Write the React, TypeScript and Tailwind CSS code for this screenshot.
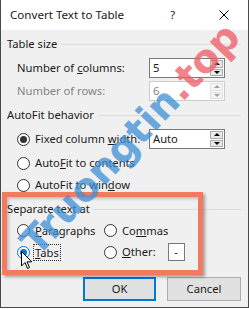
import React from "react";

const Header = ({ text }: { text: React.ReactNode }) => (
    <div className="flex items-center h-[16px] mt-[6px]">
        <span className="shrink-0 pr-[4px]">{text}</span>
        <div className="flex-1 h-px bg-[#dcdcdc] mr-[1px]" />
    </div>
);

const Radio = ({ checked, hover }: { checked?: boolean; hover?: boolean }) => (
    <span
        className={
            "w-[13px] h-[13px] rounded-full border bg-white flex items-center justify-center shrink-0 " +
            (hover ? "border-[#0078d7]" : "border-[#333333]")
        }
    >
        {checked && (
            <span className={"w-[7px] h-[7px] rounded-full " + (hover ? "bg-[#0078d7]" : "bg-[#333333]")} />
        )}
    </span>
);

const Spin = ({ value, disabled }: { value: string; disabled?: boolean }) => (
    <div
        className={
            "ml-auto w-[76px] h-[20px] border bg-white flex items-stretch shrink-0 " +
            (disabled ? "border-[#cccccc] text-[#838383]" : "border-[#7a7a7a]")
        }
    >
        <span className="flex-1 pl-[3px] leading-[18px]">{value}</span>
        <div className="w-[15px] flex flex-col gap-px p-px">
            {["M1 4 L4 1 L7 4 Z", "M1 1 L4 4 L7 1 Z"].map((d, i) => (
                <div
                    key={i}
                    className={
                        "flex-1 flex items-center justify-center border " +
                        (disabled ? "border-[#e0e0e0] bg-[#f4f4f4]" : "border-[#adadad] bg-[#e8e8e8]")
                    }
                >
                    <svg width="8" height="5" viewBox="0 0 8 5">
                        <path d={d} fill={disabled ? "#a0a0a0" : "#000"} />
                    </svg>
                </div>
            ))}
        </div>
    </div>
);

export default function App() {
    return (
        <div className="w-[249px] h-[309px] bg-white font-['Noto_Sans',sans-serif] text-[11.2px] text-[#1a1a1a]">
            <div className="relative w-[249px] h-[308px] overflow-hidden border-l border-r border-b border-[#4a4a4a] bg-[#f0f0f0]">
                {/* title bar */}
                <div className="h-[30px] bg-white flex items-center pl-[9px]">
                    <span className="text-[11.6px]">Convert Text to Table</span>
                    <span className="ml-auto mr-[44px]">?</span>
                    <svg width="10" height="10" viewBox="0 0 10 10" className="mr-[19px]">
                        <path d="M0.5 0.5 L9.5 9.5 M9.5 0.5 L0.5 9.5" stroke="#000" strokeWidth="1" />
                    </svg>
                </div>

                <div className="pl-[6px] pr-[6px]">
                    <Header text="Table size" />
                    <div className="flex items-center h-[20px] mt-[6px] pl-[10px] pr-[17px]">
                        <span>Number of <u>c</u>olumns:</span>
                        <Spin value="5" />
                    </div>
                    <div className="flex items-center h-[20px] mt-[3px] pl-[10px] pr-[17px] text-[#838383]">
                        <span>Number of rows:</span>
                        <Spin value="6" disabled />
                    </div>

                    <Header text="AutoFit behavior" />
                    <div className="flex items-center h-[20px] mt-[6px] pl-[10px] pr-[17px]">
                        <Radio checked />
                        <span className="ml-[5px]">Fixed column <u>w</u>idth:</span>
                        <Spin value="Auto" />
                    </div>
                    <div className="flex items-center h-[20px] mt-[4px] pl-[10px]">
                        <Radio />
                        <span className="ml-[5px]">Auto<u>F</u>it to contents</span>
                    </div>
                    <div className="flex items-center h-[20px] mt-[2px] pl-[10px]">
                        <Radio />
                        <span className="ml-[5px]">AutoFit to win<u>d</u>ow</span>
                    </div>

                    <div className="mt-[1px]">
                        <Header text="Separate text at" />
                    </div>
                    <div className="grid grid-cols-[87px_1fr] h-[20px] mt-[4px] pl-[10px] items-center">
                        <div className="flex items-center">
                            <Radio />
                            <span className="ml-[5px]"><u>P</u>aragraphs</span>
                        </div>
                        <div className="flex items-center">
                            <Radio />
                            <span className="ml-[5px]">Co<u>m</u>mas</span>
                        </div>
                    </div>
                    <div className="grid grid-cols-[87px_1fr] h-[20px] mt-[1px] pl-[10px] items-center">
                        <div className="flex items-center">
                            <Radio checked hover />
                            <span className="ml-[3px] px-[1px] border border-dotted border-[#333] leading-[15px]">
                                <u>T</u>abs
                            </span>
                        </div>
                        <div className="flex items-center">
                            <Radio />
                            <span className="ml-[5px]"><u>O</u>ther:</span>
                            <span className="ml-[12px] w-[17px] h-[18px] border border-[#7a7a7a] bg-white flex items-center justify-center">-</span>
                        </div>
                    </div>

                    <div className="flex mt-[15px] pl-[76px] gap-[11px]">
                        <button className="w-[73px] h-[24px] border-2 border-[#0078d7] bg-[#e1e1e1]">OK</button>
                        <button className="w-[74px] h-[24px] border border-[#adadad] bg-[#e1e1e1]">Cancel</button>
                    </div>
                </div>

                {/* highlight box */}
                <div className="absolute left-[1px] top-[192px] w-[201px] h-[83px] border-[5px] border-[#f27b5f] shadow-[2px_2px_3px_rgba(0,0,0,0.35),inset_2px_2px_3px_rgba(0,0,0,0.2)]" />

                {/* watermark */}
                <div className="absolute left-[-24px] top-[112px] w-[320px] -rotate-[47deg] font-['DejaVu_Sans',sans-serif] font-bold text-[39px] leading-none whitespace-nowrap pointer-events-none opacity-75">
                    <span className="text-[#3d8fd6]">Truongtin</span>
                    <span className="text-[#ee5a64]">.top</span>
                </div>

                {/* cursor */}
                <svg width="12" height="19" viewBox="0 0 12 19" className="absolute left-[20px] top-[251px]">
                    <path d="M0.5 0.5 L0.5 15 L4 11.5 L6.5 17.5 L8.5 16.5 L6 10.8 L10.8 10.8 Z" fill="#fff" stroke="#000" strokeWidth="1" strokeLinejoin="round" />
                </svg>
            </div>
        </div>
    );
}
